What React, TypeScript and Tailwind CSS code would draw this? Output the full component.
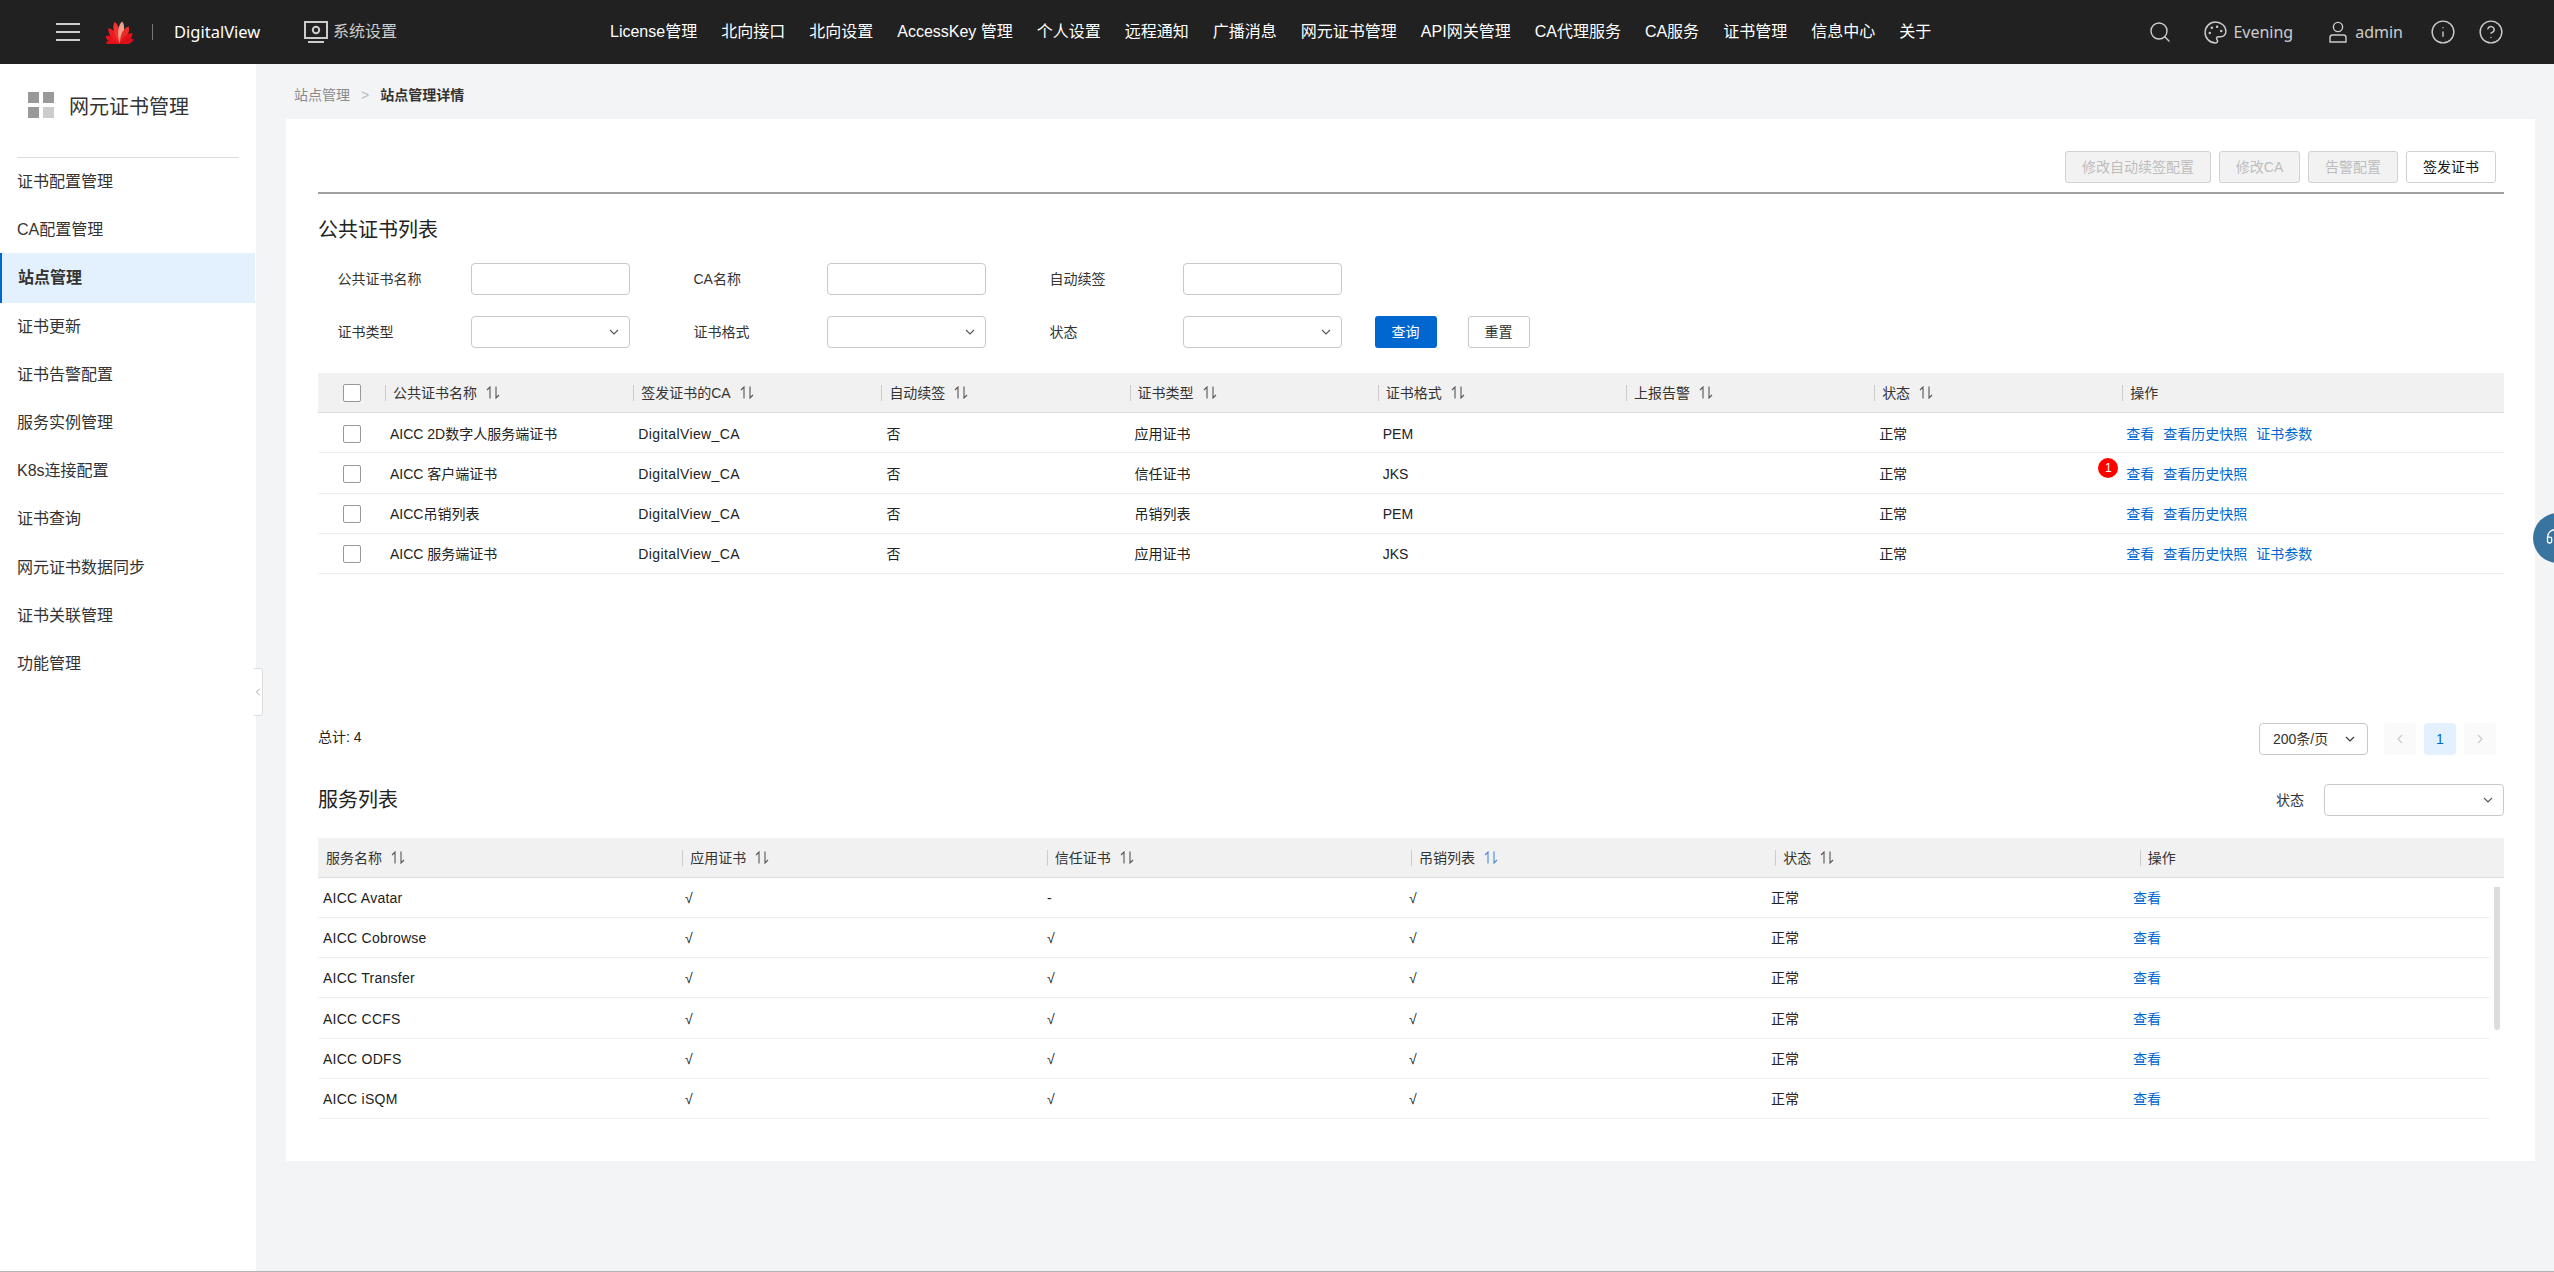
import { CircleHelp, Headset, Info, Palette, Search } from "lucide-react";

const sideItems = [
    "证书配置管理",
    "CA配置管理",
    "站点管理",
    "证书更新",
    "证书告警配置",
    "服务实例管理",
    "K8s连接配置",
    "证书查询",
    "网元证书数据同步",
    "证书关联管理",
    "功能管理",
];

const navItems = [
    "License管理",
    "北向接口",
    "北向设置",
    "AccessKey 管理",
    "个人设置",
    "远程通知",
    "广播消息",
    "网元证书管理",
    "API网关管理",
    "CA代理服务",
    "CA服务",
    "证书管理",
    "信息中心",
    "关于",
];

const certHeaders = ["公共证书名称", "签发证书的CA", "自动续签", "证书类型", "证书格式", "上报告警", "状态"];

const certRows = [
    { name: "AICC 2D数字人服务端证书", type: "应用证书", format: "PEM", params: true, badge: false },
    { name: "AICC 客户端证书", type: "信任证书", format: "JKS", params: false, badge: true },
    { name: "AICC吊销列表", type: "吊销列表", format: "PEM", params: false, badge: false },
    { name: "AICC 服务端证书", type: "应用证书", format: "JKS", params: true, badge: false },
];

const serviceHeaders = ["服务名称", "应用证书", "信任证书", "吊销列表", "状态"];

const serviceRows = [
    { name: "AICC Avatar", trust: "-" },
    { name: "AICC Cobrowse", trust: "√" },
    { name: "AICC Transfer", trust: "√" },
    { name: "AICC CCFS", trust: "√" },
    { name: "AICC ODFS", trust: "√" },
    { name: "AICC iSQM", trust: "√" },
];

const Chevron = ({ dir = "down" }: { dir?: "down" | "left" | "right" }) => {
    const d = dir === "down" ? "M1 3l4 4 4-4" : dir === "left" ? "M7 1L3 5l4 4" : "M3 1l4 4-4 4";
    return (
        <svg className="h-[10px] w-[10px]" viewBox="0 0 10 10" fill="none" stroke="currentColor" strokeWidth={1.1}>
            <path d={d} />
        </svg>
    );
};

const SortIcon = ({ active }: { active?: boolean }) => (
    <svg
        className={active ? "ml-[9px] h-[13px] w-[14px] text-[#4a8ad8]" : "ml-[9px] h-[13px] w-[14px] text-[#555555]"}
        viewBox="0 0 14 13"
        fill="none"
        stroke="currentColor"
        strokeWidth={1.1}
    >
        <path d="M4 12.5V1L1 4M10 .5V12l3-3" />
    </svg>
);

const HuaweiLogo = () => {
    const petals = [
        { a: -80, l: 14, c: "#d9101a" },
        { a: -57, l: 16, c: "#e5121c" },
        { a: -32, l: 19, c: "#ee1c22" },
        { a: -10, l: 22, c: "#f0342e" },
        { a: 10, l: 22, c: "#f0a08c" },
        { a: 32, l: 19, c: "#ee2a26" },
        { a: 57, l: 16, c: "#e5121c" },
        { a: 80, l: 14, c: "#d9101a" },
    ];
    return (
        <svg className="h-6 w-8" viewBox="0 0 32 24">
            {petals.map((p, i) => (
                <path
                    key={i}
                    transform={`translate(16 23.5) rotate(${p.a})`}
                    fill={p.c}
                    d={`M0 0C-5 ${-p.l * 0.35} -5 ${-p.l * 0.85} -1.6 ${-p.l}C3 ${-p.l * 0.8} 2.6 ${-p.l * 0.35} 0 0Z`}
                />
            ))}
        </svg>
    );
};

const Field = ({ label, select }: { label: string; select?: boolean }) => (
    <div className="flex items-center">
        <span className="w-[133px] text-sm text-[#333333]">{label}</span>
        <div className="flex h-8 w-[159px] items-center justify-end rounded-[4px] border border-[#c8c8c8] pr-[10px] text-[#555555]">
            {select && <Chevron />}
        </div>
    </div>
);

const ToolButton = ({ label, width }: { label: string; width: string }) => (
    <button
        className={`flex h-8 items-center justify-center rounded-[3px] border border-[#d2d2d2] bg-[#f2f2f2] text-sm text-[#bdbdbd] ${width}`}
    >
        {label}
    </button>
);

export default function App() {
    return (
        <div className="relative flex h-[1272px] w-[2554px] flex-col overflow-hidden border-b border-[#b5b5b5] bg-[#f3f4f6] font-['Liberation_Sans','Noto_Sans_CJK_SC',sans-serif] text-[#222222]">
            <header className="flex h-16 shrink-0 items-center bg-[#212121] pl-14 pr-[50px] text-white">
                <div className="flex w-6 flex-col gap-[6px]">
                    <span className="h-[2px] bg-[#cccccc]" />
                    <span className="h-[2px] bg-[#cccccc]" />
                    <span className="h-[2px] bg-[#cccccc]" />
                </div>
                <div className="ml-6">
                    <HuaweiLogo />
                </div>
                <span className="ml-4 h-4 w-px bg-[#777777]" />
                <span className="ml-[21px] w-[86px] font-['Noto_Sans',sans-serif] text-[16.5px]">DigitalView</span>
                <svg className="ml-[44px] h-[22px] w-6" viewBox="0 0 24 22" fill="none" stroke="#cccccc">
                    <rect x="1" y="1" width="22" height="16" strokeWidth="2" />
                    <circle cx="12" cy="9" r="3.2" strokeWidth="2" />
                    <path d="M4 21h16" strokeWidth="2" />
                </svg>
                <span className="ml-[5px] text-base text-[#cccccc]">系统设置</span>
                <nav className="ml-[213px] flex gap-6 text-base">
                    {navItems.map((item) => (
                        <span key={item} className="whitespace-pre">
                            {item}
                        </span>
                    ))}
                </nav>
                <div className="ml-auto flex items-center font-['Noto_Sans',sans-serif] text-base text-[#cccccc]">
                    <Search className="h-[24px] w-[24px]" strokeWidth={1.4} />
                    <Palette className="ml-[31px] h-[25px] w-[25px]" strokeWidth={1.4} />
                    <span className="ml-[5px]">Evening</span>
                    <svg className="ml-[35px] h-[22px] w-5" viewBox="0 0 20 22" fill="none" stroke="currentColor" strokeWidth={1.4}>
                        <circle cx="10" cy="6" r="4.6" />
                        <path d="M2 21v-4.5c0-1.4 1-2.5 2.5-2.5h11c1.5 0 2.5 1.1 2.5 2.5V21z" />
                    </svg>
                    <span className="ml-[7px]">admin</span>
                    <Info className="ml-[27px] h-[26px] w-[26px]" strokeWidth={1.3} />
                    <CircleHelp className="ml-[22px] h-[26px] w-[26px]" strokeWidth={1.3} />
                </div>
            </header>

            <div className="flex min-h-0 flex-1">
                <aside className="relative w-[256px] shrink-0 bg-white">
                    <div className="flex h-[93px] items-start pl-7 pt-7">
                        <div className="grid grid-cols-2 gap-1">
                            <span className="h-[11px] w-[11px] bg-[#999999]" />
                            <span className="h-[11px] w-[11px] bg-[#999999]" />
                            <span className="h-[11px] w-[11px] bg-[#999999]" />
                            <span className="h-[11px] w-[11px] bg-[#cccccc]" />
                        </div>
                        <span className="ml-[15px] mt-[2px] text-xl leading-[26px] text-[#333333]">网元证书管理</span>
                    </div>
                    <div className="mx-[17px] h-px w-[222px] bg-[#dddddd]" />
                    <ul className="text-base text-[#333333]">
                        {sideItems.map((item) =>
                            item === "站点管理" ? (
                                <li
                                    key={item}
                                    className="my-[-0.9px] mr-px flex h-[50px] items-center border-l-2 border-[#0067d1] bg-[#e3f0fd] pl-[16px] font-bold"
                                >
                                    {item}
                                </li>
                            ) : (
                                <li key={item} className="flex h-[48.2px] items-center pl-[17px]">
                                    {item}
                                </li>
                            ),
                        )}
                    </ul>
                    <div className="absolute left-[254px] top-[604px] flex h-12 w-[9px] items-center justify-center rounded-r-[3px] border border-l-0 border-[#dddddd] bg-white text-[#999999]">
                        <Chevron dir="left" />
                    </div>
                </aside>

                <main className="min-w-0 flex-1 pl-[30px]">
                    <div className="flex h-[55px] items-center gap-[11px] pl-2 pt-[7px] text-sm">
                        <span className="text-[#8a8a8a]">站点管理</span>
                        <span className="text-[#bbbbbb]">&gt;</span>
                        <span className="font-bold text-[#333333]">站点管理详情</span>
                    </div>

                    <section className="h-[1042px] w-[2249px] bg-white pl-8 pr-[31px] pt-8">
                        <div className="flex justify-end gap-2 pr-2">
                            <ToolButton label="修改自动续签配置" width="w-[146px]" />
                            <ToolButton label="修改CA" width="w-[81px]" />
                            <ToolButton label="告警配置" width="w-[90px]" />
                            <button className="flex h-8 w-[90px] items-center justify-center rounded-[3px] border border-[#d2d2d2] bg-white text-sm text-[#191919]">
                                签发证书
                            </button>
                        </div>
                        <div className="mt-[9px] h-[2px] bg-[#a0a0a0]" />

                        <h2 className="mt-[22px] text-xl leading-7 text-[#222222]">公共证书列表</h2>

                        <div className="ml-[19.5px] mt-[19px] flex flex-col gap-[21px]">
                            <div className="flex gap-[64px]">
                                <Field label="公共证书名称" />
                                <Field label="CA名称" />
                                <Field label="自动续签" />
                            </div>
                            <div className="flex items-center">
                                <div className="flex gap-[64px]">
                                    <Field label="证书类型" select />
                                    <Field label="证书格式" select />
                                    <Field label="状态" select />
                                </div>
                                <button className="ml-[33px] h-8 w-[62px] rounded-[3px] bg-[#0067d1] text-sm text-white">查询</button>
                                <button className="ml-[31px] h-8 w-[62px] rounded-[3px] border border-[#c8c8c8] text-sm text-[#333333]">重置</button>
                            </div>
                        </div>

                        <div className="mt-[25px]">
                            <div className="grid h-10 grid-cols-[67px_repeat(7,248.2px)_1fr] items-center border-b border-[#dddddd] bg-[#f1f1f1] text-sm text-[#333333]">
                                <div className="pl-[25px]">
                                    <span className="block h-[18px] w-[18px] rounded-[2px] border border-[#999999] bg-white" />
                                </div>
                                {certHeaders.map((h) => (
                                    <div key={h} className="flex h-4 items-center border-l border-[#cccccc] pl-[7px]">
                                        {h}
                                        <SortIcon />
                                    </div>
                                ))}
                                <div className="flex h-4 items-center border-l border-[#cccccc] pl-[7px]">操作</div>
                            </div>
                            {certRows.map((row) => (
                                <div
                                    key={row.name}
                                    className="grid h-[40.25px] grid-cols-[67px_repeat(7,248.2px)_1fr] items-center border-b border-[#efefef] pt-[2px] text-sm text-[#222222]"
                                >
                                    <div className="pl-[25px]">
                                        <span className="block h-[18px] w-[18px] rounded-[2px] border border-[#999999]" />
                                    </div>
                                    <div className="pl-[5px]">{row.name}</div>
                                    <div className="pl-[5px] tracking-[0.4px]">DigitalView_CA</div>
                                    <div className="pl-[5px]">否</div>
                                    <div className="pl-[5px]">{row.type}</div>
                                    <div className="pl-[5px]">{row.format}</div>
                                    <div />
                                    <div className="pl-[5px]">正常</div>
                                    <div className="relative flex gap-[9px] pl-[4px] text-[#0067d1]">
                                        {row.badge && (
                                            <span className="absolute left-[-24px] top-[-6px] flex h-5 w-5 items-center justify-center rounded-full bg-[#ff0000] text-xs text-white">
                                                1
                                            </span>
                                        )}
                                        <span>查看</span>
                                        <span>查看历史快照</span>
                                        {row.params && <span>证书参数</span>}
                                    </div>
                                </div>
                            ))}
                        </div>

                        <div className="mt-[149px] flex h-8 items-center justify-between pr-2">
                            <span className="mb-[5px] text-sm">总计: 4</span>
                            <div className="flex items-center">
                                <div className="flex h-8 w-[109px] items-center justify-between rounded-[4px] border border-[#c8c8c8] pl-[13px] pr-[12px] text-sm text-[#333333]">
                                    200条/页
                                    <Chevron />
                                </div>
                                <span className="ml-4 flex h-8 w-8 items-center justify-center rounded-[4px] bg-[#fafafa] text-[#c8c8c8]">
                                    <Chevron dir="left" />
                                </span>
                                <span className="ml-2 flex h-8 w-8 items-center justify-center rounded-[4px] bg-[#e3f0fd] text-sm text-[#0067d1]">1</span>
                                <span className="ml-2 flex h-8 w-8 items-center justify-center rounded-[4px] bg-[#fafafa] text-[#c8c8c8]">
                                    <Chevron dir="right" />
                                </span>
                            </div>
                        </div>

                        <div className="mt-[29px] flex h-8 items-center justify-between">
                            <h2 className="text-xl text-[#222222]">服务列表</h2>
                            <div className="flex items-center">
                                <span className="w-12 text-sm text-[#333333]">状态</span>
                                <div className="flex h-8 w-[180px] items-center justify-end rounded-[4px] border border-[#c8c8c8] pr-[10px] text-[#555555]">
                                    <Chevron />
                                </div>
                            </div>
                        </div>

                        <div className="relative mt-[22px]">
                            <div className="grid h-10 grid-cols-6 items-center border-b border-[#dddddd] bg-[#f1f1f1] text-sm text-[#333333]">
                                {serviceHeaders.map((h, i) => (
                                    <div
                                        key={h}
                                        className={i === 0 ? "flex h-4 items-center pl-2" : "flex h-4 items-center border-l border-[#cccccc] pl-[7px]"}
                                    >
                                        {h}
                                        <SortIcon active={h === "吊销列表"} />
                                    </div>
                                ))}
                                <div className="flex h-4 items-center border-l border-[#cccccc] pl-[7px]">操作</div>
                            </div>
                            <div className="pr-[14px]">
                                {serviceRows.map((row) => (
                                    <div key={row.name} className="grid h-[40.17px] grid-cols-6 items-center border-b border-[#efefef] pt-px text-sm text-[#222222]">
                                        <div className="pl-[5px] tracking-[0.25px]">{row.name}</div>
                                        <div className="pl-[5px]">√</div>
                                        <div className="pl-[5px]">{row.trust}</div>
                                        <div className="pl-[5px]">√</div>
                                        <div className="pl-[5px]">正常</div>
                                        <div className="pl-[5px] text-[#0067d1]">查看</div>
                                    </div>
                                ))}
                            </div>
                            <span className="absolute right-1 top-[49px] h-[143px] w-[6px] rounded-b-[3px] bg-[#dddddd]" />
                        </div>
                    </section>
                </main>
            </div>

            <div className="absolute left-[2533px] top-[513px] flex h-[50px] w-[50px] items-center rounded-full bg-[#39739f] pl-[12px] text-white">
                <Headset className="h-[20px] w-[20px]" strokeWidth={1.6} />
            </div>
        </div>
    );
}
